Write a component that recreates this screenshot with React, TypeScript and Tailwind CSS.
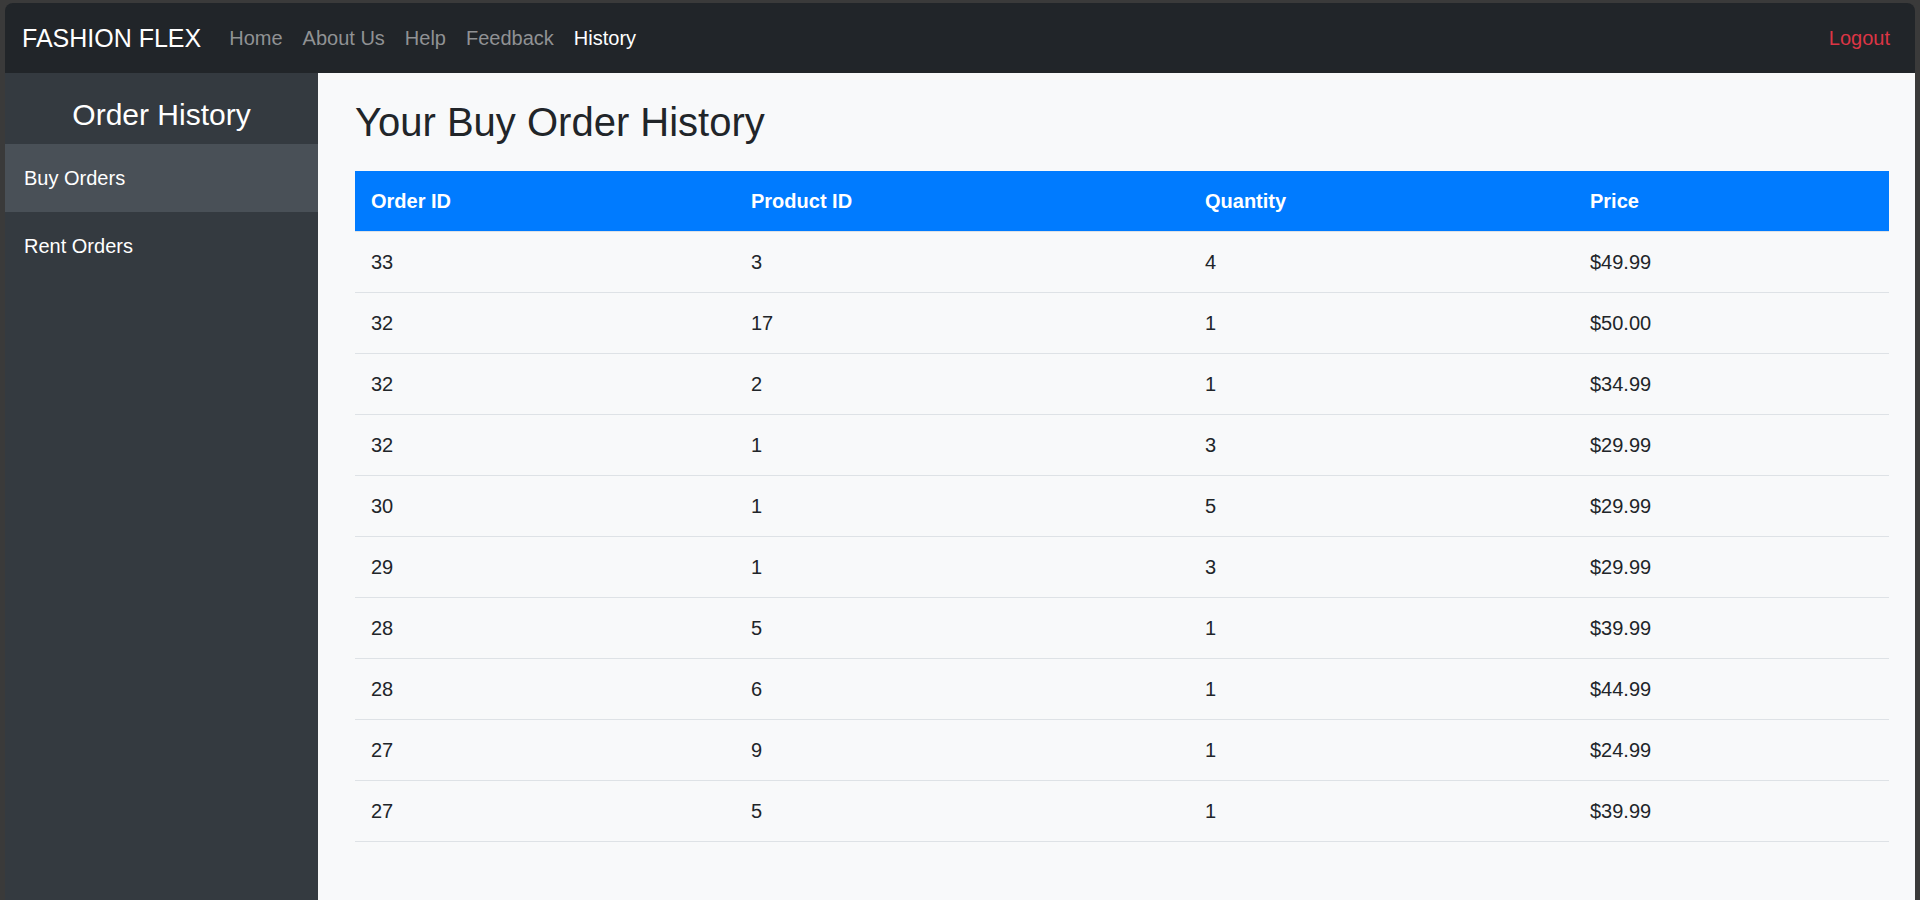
import * as React from "react";

const navLinks = ["Home", "About Us", "Help", "Feedback"];

const orders = [
  { orderId: 33, productId: 3, quantity: 4, price: "$49.99" },
  { orderId: 32, productId: 17, quantity: 1, price: "$50.00" },
  { orderId: 32, productId: 2, quantity: 1, price: "$34.99" },
  { orderId: 32, productId: 1, quantity: 3, price: "$29.99" },
  { orderId: 30, productId: 1, quantity: 5, price: "$29.99" },
  { orderId: 29, productId: 1, quantity: 3, price: "$29.99" },
  { orderId: 28, productId: 5, quantity: 1, price: "$39.99" },
  { orderId: 28, productId: 6, quantity: 1, price: "$44.99" },
  { orderId: 27, productId: 9, quantity: 1, price: "$24.99" },
  { orderId: 27, productId: 5, quantity: 1, price: "$39.99" },
];

const cols = "grid grid-cols-[380px_454px_385px_1fr]";

export default function App() {
  return (
    <div
      className="h-screen bg-[#3a3a3a] pt-[3px] px-[5px] overflow-hidden"
      style={{ fontFamily: '"Liberation Sans", Arial, sans-serif' }}
    >
      <div className="h-full flex flex-col rounded-t-[8px] overflow-hidden">
        {/* top navbar */}
        <nav className="h-[70px] shrink-0 bg-[#212529] flex items-center pl-[17px] pr-[25px]">
          <span className="text-[25px] text-white leading-[30px] mr-[18px]">FASHION FLEX</span>
          {navLinks.map((l) => (
            <a key={l} className="px-[10px] text-[20px] leading-[30px] text-[#909294]">
              {l}
            </a>
          ))}
          <a className="px-[10px] text-[20px] leading-[30px] text-white">History</a>
          <a className="ml-auto text-[20px] leading-[30px] text-[#dc3545]">Logout</a>
        </nav>

        <div className="flex flex-1 min-h-0">
          {/* sidebar */}
          <aside className="w-[313px] shrink-0 bg-[#343a40] text-white">
            <div className="h-[71px] flex items-end justify-center pb-[11px] text-[30px] leading-[36px]">
              Order History
            </div>
            <div className="h-[68px] flex items-center pl-[19px] bg-[#495057] text-[20px]">Buy Orders</div>
            <div className="h-[68px] flex items-center pl-[19px] text-[20px]">Rent Orders</div>
          </aside>

          {/* main */}
          <main className="flex-1 bg-[#f8f9fa] pl-[37px] pr-[26px] pt-[25px] text-[#212529]">
            <h2 className="text-[40px] leading-[48px] mb-[25px]">Your Buy Order History</h2>

            <div className="text-[20px]">
              <div className={`${cols} h-[60px] items-center bg-[#007bff] text-white font-bold`}>
                <div className="px-[16px]">Order ID</div>
                <div className="px-[16px]">Product ID</div>
                <div className="px-[16px]">Quantity</div>
                <div className="px-[16px]">Price</div>
              </div>
              <div className="h-px bg-[#dee2e6]" />
              {orders.map((o, i) => (
                <div key={i} className={`${cols} h-[61px] items-center border-b border-[#dee2e6]`}>
                  <div className="px-[16px]">{o.orderId}</div>
                  <div className="px-[16px]">{o.productId}</div>
                  <div className="px-[16px]">{o.quantity}</div>
                  <div className="px-[16px]">{o.price}</div>
                </div>
              ))}
            </div>
          </main>
        </div>
      </div>
    </div>
  );
}
